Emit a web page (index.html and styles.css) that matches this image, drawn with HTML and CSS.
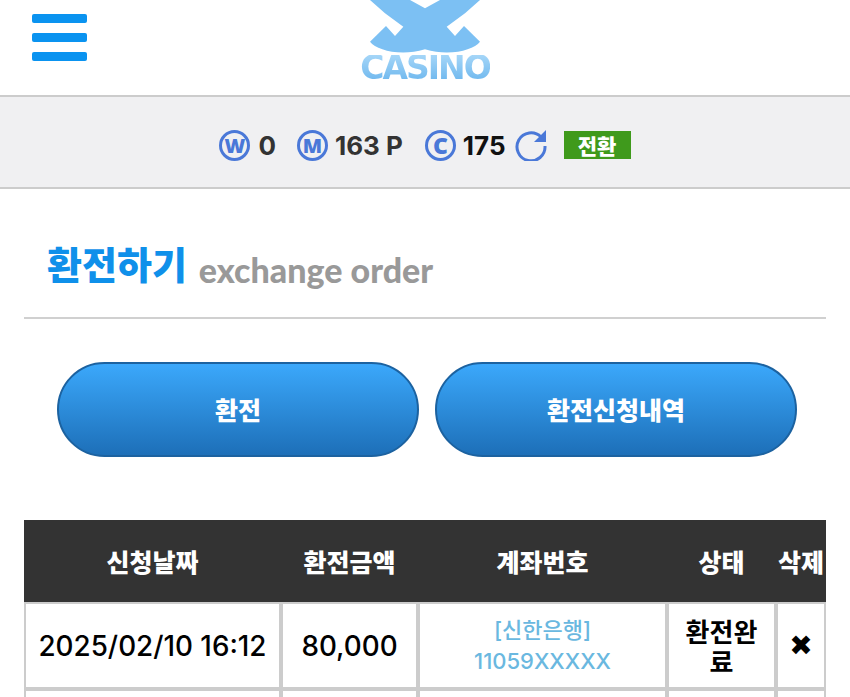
FILE: index.html
```html
<!DOCTYPE html>
<html lang="ko">
<head>
  <meta charset="UTF-8" />
  <meta name="viewport" content="width=device-width, initial-scale=1.0" />
  <title>환전하기 - X Casino</title>
  <link rel="stylesheet" href="styles.css">
</head>
<body>
  <header class="top">
    <div class="menu-btn"><span></span><span></span><span></span></div>
    <div class="logo">
      <svg class="logo-mark" viewBox="0 0 330 165" width="110" height="55">
        <path fill="#7cc0f3" d="M0,0 H120 L165,25 L210,0 H330 L285,40 L230,80 L255,108 L282,78 L330,125 C310,150 240,170 165,148 C90,170 20,150 0,125 L48,78 L75,108 L100,80 L45,40 Z"/>
      </svg>
      <div class="logo-text">CASINO</div>
    </div>
  </header>

  <div class="wallet">
    <span class="coin">W</span><b class="amount amount-w">0</b>
    <span class="coin coin-m">M</span><b class="amount amount-m">163 P</b>
    <span class="coin coin-c">C</span><b class="amount amount-c">175</b>
    <svg class="refresh" viewBox="0 0 32 32" width="32" height="32">
      <path d="M26 8 A14 14 0 1 0 30 17" fill="none" stroke="#4a78d8" stroke-width="3"/>
      <path d="M31 1 V13 H19 Z" fill="#4a78d8"/>
    </svg>
    <button class="swap">전환</button>
  </div>

  <div class="title">
    <h2>환전하기</h2>
    <span>exchange order</span>
  </div>

  <div class="tabs">
    <a class="tab">환전</a>
    <a class="tab">환전신청내역</a>
  </div>

  <table class="orders">
    <thead>
      <tr>
        <th class="col-date">신청날짜</th>
        <th class="col-money">환전금액</th>
        <th class="col-account">계좌번호</th>
        <th class="col-status">상태</th>
        <th class="col-del">삭제</th>
      </tr>
    </thead>
    <tbody>
      <tr>
        <td>2025/02/10 16:12</td>
        <td>80,000</td>
        <td class="account">[신한은행]<br>11059XXXXX</td>
        <td class="status">환전완료</td>
        <td class="del">✖</td>
      </tr>
      <tr>
        <td>&nbsp;</td>
        <td>&nbsp;</td>
        <td>&nbsp;</td>
        <td>&nbsp;</td>
        <td>&nbsp;</td>
      </tr>
    </tbody>
  </table>
</body>
</html>
```

FILE: styles.css
```css
html, body {
  height: 100%;
  overflow: hidden;
}
body {
  margin: 0;
  background-color: #fff;
  font-family: "Noto Sans CJK KR", "Noto Sans", sans-serif;
  color: #000;
}
.top {
  display: grid;
  grid-template-columns: 1fr auto 1fr;
  height: 95px;
  border-bottom: 2px solid #ccc;
}
.menu-btn {
  display: flex;
  flex-direction: column;
  gap: 10px;
  width: 55px;
  margin: 14px 0 0 32px;
}
.menu-btn span {
  height: 9px;
  background-color: #0a93f0;
  border-radius: 2px;
}
.logo {
  grid-column: 2;
  display: flex;
  flex-direction: column;
  align-items: center;
}
.logo-mark {
  display: block;
}
.logo-text {
  font-family: "DejaVu Sans", sans-serif;
  font-weight: 700;
  font-size: 33px;
  line-height: 26px;
  letter-spacing: -2px;
  background: linear-gradient(#a5d6f8, #6fb8ee);
  -webkit-background-clip: text;
  background-clip: text;
  color: transparent;
}
.wallet {
  box-sizing: border-box;
  display: flex;
  align-items: center;
  justify-content: center;
  height: 92px;
  padding-top: 6px;
  background-color: #f0f0f2;
  border-bottom: 2px solid #ccc;
}
.coin {
  box-sizing: border-box;
  width: 31px;
  height: 31px;
  border: 3px solid #4a78d8;
  border-radius: 50%;
  color: #4a78d8;
  font-family: "Noto Sans", sans-serif;
  font-weight: 900;
  font-size: 20px;
  line-height: 25px;
  text-align: center;
}
.coin-c {
  font-size: 23px;
}
.amount {
  font-family: "Inter", sans-serif;
  font-weight: 700;
  font-size: 26px;
  color: #333;
}
.amount-w {
  margin: 0 21px 0 8px;
}
.amount-m {
  margin: 0 22px 0 7px;
}
.amount-c {
  margin: 0 9px 0 7px;
  color: #111;
}
.refresh {
  display: block;
}
.swap {
  width: 67px;
  height: 28px;
  margin-left: 17px;
  padding: 0;
  border: 0;
  background-color: #3f9a1c;
  color: #fff;
  font-family: inherit;
  font-weight: 900;
  font-size: 21px;
  line-height: 28px;
}
.title {
  display: flex;
  align-items: flex-start;
  gap: 12px;
  height: 130px;
  box-sizing: border-box;
  margin: 0 24px;
  padding: 48px 0 0 23px;
  border-bottom: 2px solid #d0d0d0;
}
.title h2 {
  margin: 0;
  font-size: 38px;
  font-weight: 900;
  line-height: 52px;
  color: #0f90ea;
}
.title span {
  margin-top: 7px;
  font-family: "Lato", sans-serif;
  font-weight: 900;
  font-size: 34px;
  line-height: 52px;
  color: #999;
}
.tabs {
  display: flex;
  gap: 16px;
  margin: 43px 0 0 57px;
}
.tab {
  box-sizing: border-box;
  width: 362px;
  height: 95px;
  border: 2px solid #1c62a0;
  border-radius: 48px;
  background: linear-gradient(#3ba8fb, #1d6fb8);
  color: #fff;
  font-weight: 900;
  font-size: 25px;
  line-height: 91px;
  text-align: center;
}
.orders {
  width: 802px;
  margin: 63px 0 0 24px;
  border-collapse: separate;
  border-spacing: 0;
  table-layout: fixed;
}
.orders th {
  height: 82px;
  padding: 0;
  background-color: #333;
  color: #fff;
  font-weight: 900;
  font-size: 25px;
}
.col-date { width: 257px; }
.col-money { width: 137px; }
.col-account { width: 249px; }
.col-status { width: 109px; }
.col-del { width: 50px; }
.orders td {
  box-sizing: border-box;
  height: 87px;
  padding: 0;
  border: 2px solid #ccc;
  background-color: #fff;
  font-family: "Inter", "Noto Sans CJK KR", sans-serif;
  font-weight: 500;
  font-size: 27.8px;
  text-align: center;
}
.orders td.account {
  font-family: "Inter", "Noto Sans CJK KR", sans-serif;
  color: #6ab8e0;
  font-size: 22px;
  line-height: 31px;
}
.orders td.status {
  padding: 0 12px;
  font-family: "Noto Sans CJK KR", sans-serif;
  font-weight: 700;
  font-size: 26px;
  line-height: 30px;
  word-break: break-all;
}
.orders td.del {
  font-family: "DejaVu Sans", sans-serif;
  font-size: 28px;
}
```
